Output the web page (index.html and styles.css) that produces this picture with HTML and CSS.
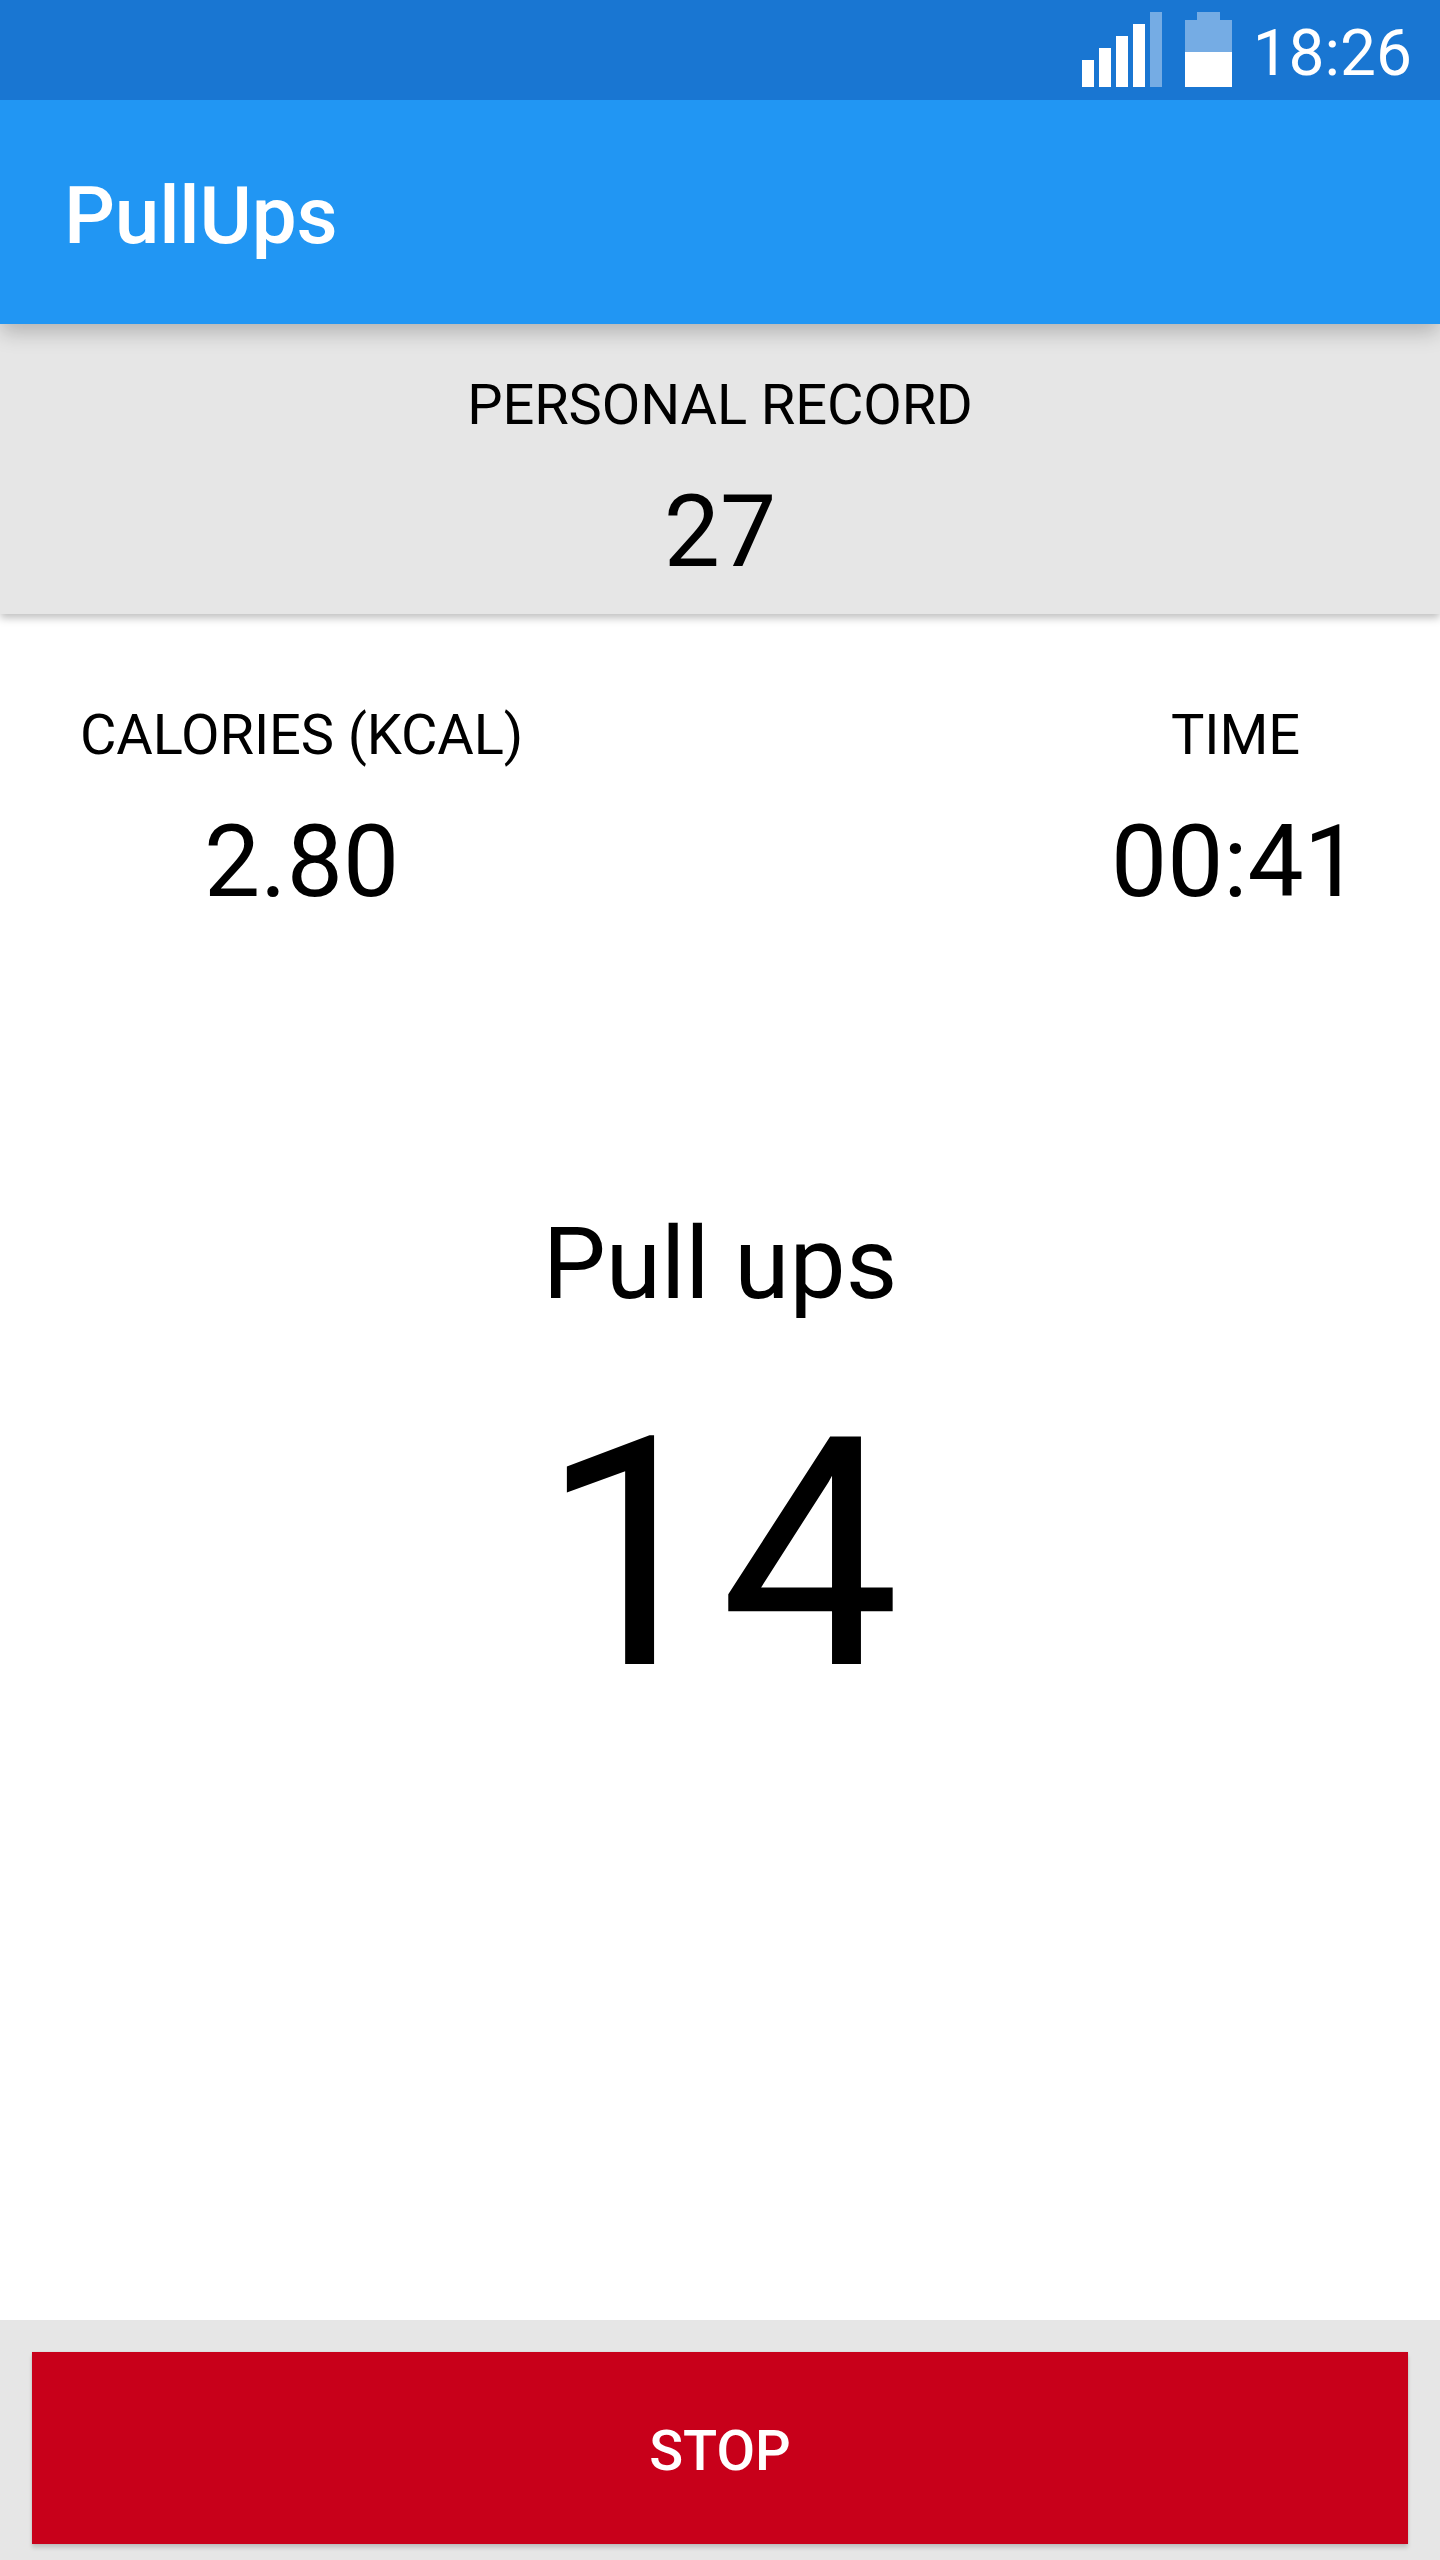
FILE: index.html
```html
<!DOCTYPE html>
<html lang="en">
<head>
<meta charset="utf-8">
<title>PullUps</title>
<link rel="stylesheet" href="styles.css">
</head>
<body>
<div class="status">
  <svg class="signal" width="80" height="75" viewBox="0 0 80 75"><path fill="#fff" d="M0 48h12v27H0zM17 36h12v39H17zM34 24h12v51H34zM51 12h12v63H51z"/><path fill="#fff" opacity=".4" d="M68 0h12v75H68z"/></svg>
  <svg class="battery" width="47" height="75" viewBox="0 0 47 75"><path fill="#fff" opacity=".4" d="M12 0h23v8h12v32H0V8h12z"/><path fill="#fff" d="M0 40h47v35H0z"/></svg>
  <span class="clock">18:26</span>
</div>
<header class="appbar"><h1 class="title">PullUps</h1></header>
<section class="record"><div class="label">PERSONAL RECORD</div><div class="value">27</div></section>
<main class="content">
  <div class="stats">
    <div class="stat"><div class="label">CALORIES (KCAL)</div><div class="value">2.80</div></div>
    <div class="stat"><div class="label">TIME</div><div class="value">00:41</div></div>
  </div>
  <div class="exercise">Pull ups</div>
  <div class="count">14</div>
</main>
<footer class="footer"><button class="stop">STOP</button></footer>
</body>
</html>
```

FILE: styles.css
```css
* { box-sizing: border-box; }
body { margin: 0; width: 1440px; height: 2560px; display: flex; flex-direction: column; background: #fff; color: #000; font-family: Roboto, sans-serif; overflow: hidden; }
.status { height: 100px; flex: none; background: #1976d2; display: flex; align-items: flex-start; justify-content: flex-end; padding: 12px 28px 0 0; color: #fff; position: relative; z-index: 3; }
.signal { margin-right: 23px; }
.battery { margin-right: 20px; }
.clock { width: 160px; text-align: right; font-size: 64px; line-height: 84px; }
.appbar { height: 224px; flex: none; background: #2196f3; padding: 8px 0 0 64px; display: flex; align-items: center; position: relative; z-index: 2; box-shadow: 0 9px 20px -1px rgba(0,0,0,.23); }
.title { margin: 0; font-size: 80px; line-height: 94px; font-weight: 500; letter-spacing: -.2px; color: #fff; }
.record { height: 290px; flex: none; background: #e6e6e6; text-align: center; padding-top: 48px; position: relative; box-shadow: 0 4px 8px rgba(0,0,0,.25); }
.label { font-size: 56px; line-height: 66px; letter-spacing: -.1px; }
.value { font-size: 100px; line-height: 118px; margin-top: 35px; }
.content { flex: 1; }
.stats { display: flex; justify-content: space-between; padding: 88px 80px 0; }
.stat { text-align: center; }
.exercise { font-size: 100px; line-height: 118px; text-align: center; margin-top: 284px; }
.count { font-size: 320px; line-height: 376px; text-align: center; margin-top: 44px; }
.footer { height: 240px; flex: none; background: #e6e6e6; padding: 32px 32px 16px; }
.stop { width: 100%; height: 192px; border: 0; border-radius: 0; background: #c8001a; color: #fff; font: 500 56px/66px Roboto, sans-serif; padding: 6px 0 0; box-shadow: 0 4px 4px rgba(0,0,0,.15), 0 0 2px rgba(0,0,0,.1); }
```
